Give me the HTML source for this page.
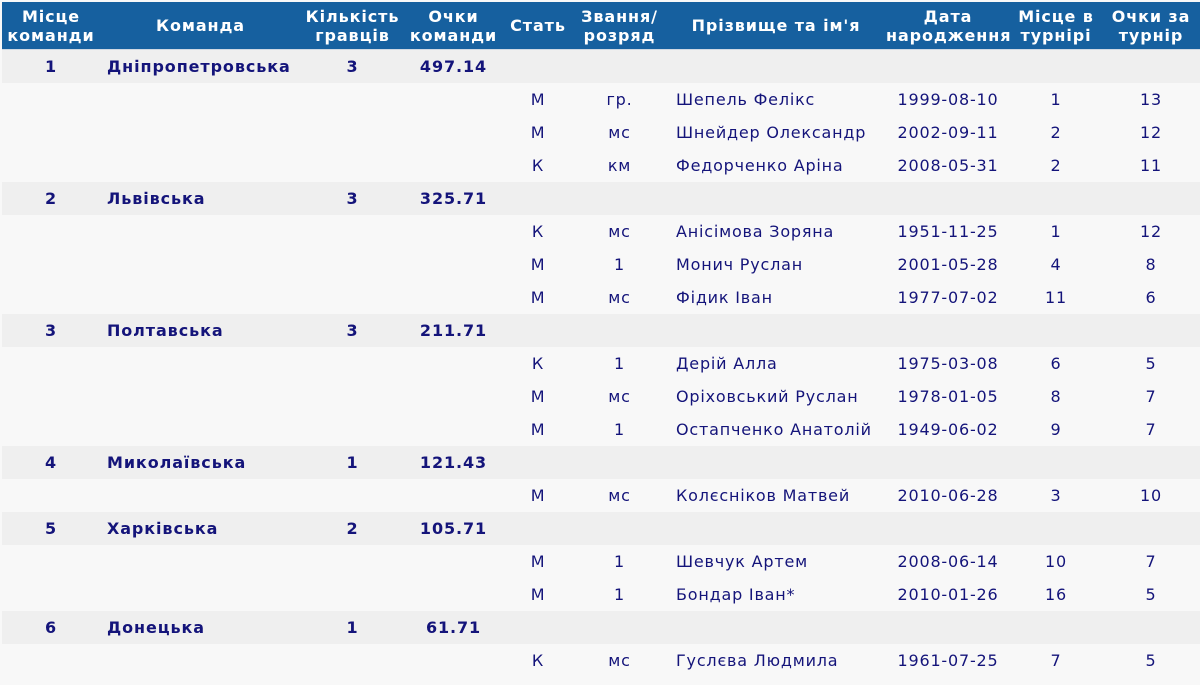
<!DOCTYPE html>
<html><head><meta charset="utf-8"><style>
body{margin:0;background:#f8f8f8;width:1200px;height:685px;overflow:hidden;font-family:"DejaVu Sans","Liberation Sans",sans-serif;}
table{position:absolute;left:2px;top:2px;border-collapse:collapse;table-layout:fixed;width:1198px;}
th{background:#16609f;color:#fff;font-weight:bold;font-size:16px;line-height:19px;height:47px;padding:0;text-align:center;letter-spacing:0.9px;border-bottom:1px solid #cfd8e3;white-space:nowrap;}
td{height:33px;padding:0;font-size:16px;color:#14147a;letter-spacing:0.8px;text-align:center;white-space:nowrap;}
tr.t td{background:#efefef;font-weight:bold;font-size:16px;letter-spacing:0.9px;}
tr.p td{background:#f8f8f8;}
td.n{text-align:left;padding-left:7px;}
td.m{text-align:left;padding-left:10px;}
</style></head><body>
<table>
<colgroup><col style="width:98px"><col style="width:201px"><col style="width:103px"><col style="width:99px"><col style="width:70px"><col style="width:93px"><col style="width:220px"><col style="width:124px"><col style="width:92px"><col style="width:98px"></colgroup>
<tr><th>Місце<br>команди</th><th>Команда</th><th>Кількість<br>гравців</th><th>Очки<br>команди</th><th>Стать</th><th>Звання/<br>розряд</th><th>Прізвище та ім'я</th><th>Дата<br>народження</th><th>Місце в<br>турнірі</th><th>Очки за<br>турнір</th></tr>
<tr class="t"><td>1</td><td class="n">Дніпропетровська</td><td>3</td><td>497.14</td><td></td><td></td><td></td><td></td><td></td><td></td></tr>
<tr class="p"><td></td><td></td><td></td><td></td><td>М</td><td>гр.</td><td class="m">Шепель Фелікс</td><td>1999-08-10</td><td>1</td><td>13</td></tr>
<tr class="p"><td></td><td></td><td></td><td></td><td>М</td><td>мс</td><td class="m">Шнейдер Олександр</td><td>2002-09-11</td><td>2</td><td>12</td></tr>
<tr class="p"><td></td><td></td><td></td><td></td><td>К</td><td>км</td><td class="m">Федорченко Аріна</td><td>2008-05-31</td><td>2</td><td>11</td></tr>
<tr class="t"><td>2</td><td class="n">Львівська</td><td>3</td><td>325.71</td><td></td><td></td><td></td><td></td><td></td><td></td></tr>
<tr class="p"><td></td><td></td><td></td><td></td><td>К</td><td>мс</td><td class="m">Анісімова Зоряна</td><td>1951-11-25</td><td>1</td><td>12</td></tr>
<tr class="p"><td></td><td></td><td></td><td></td><td>М</td><td>1</td><td class="m">Монич Руслан</td><td>2001-05-28</td><td>4</td><td>8</td></tr>
<tr class="p"><td></td><td></td><td></td><td></td><td>М</td><td>мс</td><td class="m">Фідик Іван</td><td>1977-07-02</td><td>11</td><td>6</td></tr>
<tr class="t"><td>3</td><td class="n">Полтавська</td><td>3</td><td>211.71</td><td></td><td></td><td></td><td></td><td></td><td></td></tr>
<tr class="p"><td></td><td></td><td></td><td></td><td>К</td><td>1</td><td class="m">Дерій Алла</td><td>1975-03-08</td><td>6</td><td>5</td></tr>
<tr class="p"><td></td><td></td><td></td><td></td><td>М</td><td>мс</td><td class="m">Оріховський Руслан</td><td>1978-01-05</td><td>8</td><td>7</td></tr>
<tr class="p"><td></td><td></td><td></td><td></td><td>М</td><td>1</td><td class="m">Остапченко Анатолій</td><td>1949-06-02</td><td>9</td><td>7</td></tr>
<tr class="t"><td>4</td><td class="n">Миколаївська</td><td>1</td><td>121.43</td><td></td><td></td><td></td><td></td><td></td><td></td></tr>
<tr class="p"><td></td><td></td><td></td><td></td><td>М</td><td>мс</td><td class="m">Колєсніков Матвей</td><td>2010-06-28</td><td>3</td><td>10</td></tr>
<tr class="t"><td>5</td><td class="n">Харківська</td><td>2</td><td>105.71</td><td></td><td></td><td></td><td></td><td></td><td></td></tr>
<tr class="p"><td></td><td></td><td></td><td></td><td>М</td><td>1</td><td class="m">Шевчук Артем</td><td>2008-06-14</td><td>10</td><td>7</td></tr>
<tr class="p"><td></td><td></td><td></td><td></td><td>М</td><td>1</td><td class="m">Бондар Іван*</td><td>2010-01-26</td><td>16</td><td>5</td></tr>
<tr class="t"><td>6</td><td class="n">Донецька</td><td>1</td><td>61.71</td><td></td><td></td><td></td><td></td><td></td><td></td></tr>
<tr class="p"><td></td><td></td><td></td><td></td><td>К</td><td>мс</td><td class="m">Гуслєва Людмила</td><td>1961-07-25</td><td>7</td><td>5</td></tr>
</table>
</body></html>
